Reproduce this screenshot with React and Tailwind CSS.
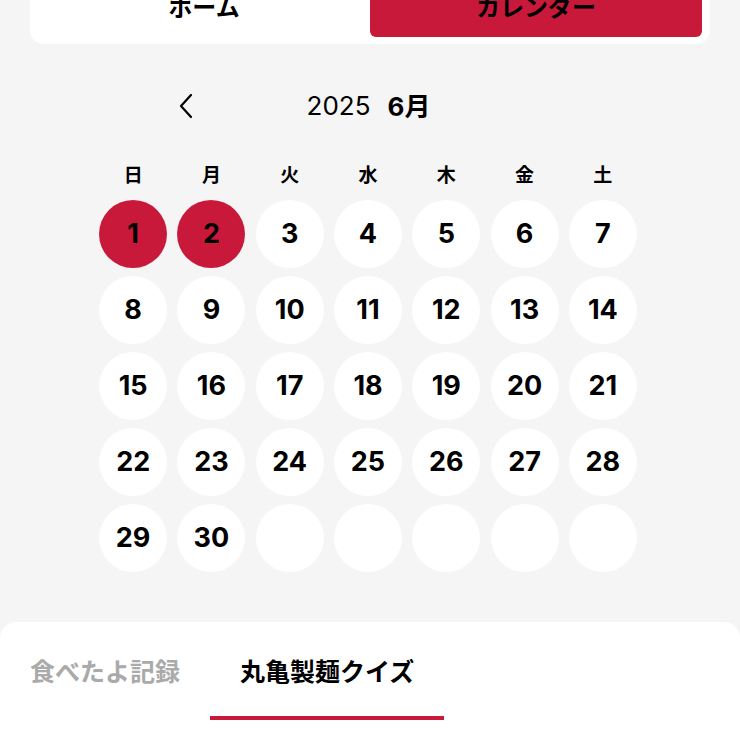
import { useState } from 'react';

const jp = { fontFamily: '"Noto Sans CJK JP", "Noto Sans", sans-serif' };
const num = { fontFamily: 'Inter, "Noto Sans CJK JP", sans-serif' };

const weekdays = ['日', '月', '火', '水', '木', '金', '土'];

export default function App() {
  const [tab, setTab] = useState('quiz');
  const marked = [1, 2];

  // June 2025 starts on Sunday, 30 days, pad to 35 cells
  const cells = Array.from({ length: 35 }, (_, i) => (i < 30 ? i + 1 : null));

  return (
    <div className="h-[740px] bg-[#f5f5f5] overflow-hidden" style={jp}>
      {/* Top switcher */}
      <div className="mx-[30px] -mt-[33px] bg-white rounded-[14px] pt-2 pb-[7px] px-2 flex">
        <button className="flex-1 h-[62px] rounded-[6px] text-[24px] font-bold text-black flex items-center justify-center">
          ホーム
        </button>
        <button className="flex-1 h-[62px] rounded-[6px] bg-[#c8193a] text-[24px] font-bold text-black flex items-center justify-center">
          カレンダー
        </button>
      </div>

      {/* Month nav */}
      <div className="mt-[42px] mx-auto w-[384px] h-10 flex items-center justify-between">
        <button className="w-4 h-10 flex items-center justify-center text-black">
          <svg width="16" height="26" viewBox="0 0 16 26" fill="none">
            <path d="M13 2 L3 13 L13 24" stroke="currentColor" strokeWidth="2.2" strokeLinecap="round" strokeLinejoin="round" />
          </svg>
        </button>
        <div className="flex items-center gap-[17px] text-black text-[26px] leading-none -ml-[3px]">
          <span style={num}>2025</span>
          <span className="font-bold">
            <span style={num}>6</span>月
          </span>
        </div>
        <div className="w-4 h-10" />
      </div>

      {/* Weekdays */}
      <div className="mt-9 ml-[94px] w-[548px] grid grid-cols-7">
        {weekdays.map((d) => (
          <div key={d} className="h-6 flex items-center justify-center text-[19px] font-bold text-black">
            {d}
          </div>
        ))}
      </div>

      {/* Days */}
      <div className="mt-[14px] ml-[94px] w-[548px] grid grid-cols-7 gap-y-2">
        {cells.map((d, i) => (
          <div key={i} className="flex justify-center">
            <div
              className={
                'w-[68px] h-[68px] rounded-full flex items-center justify-center text-[27px] font-bold text-black ' +
                (d && marked.includes(d) ? 'bg-[#c8193a]' : 'bg-white')
              }
              style={num}
            >
              {d}
            </div>
          </div>
        ))}
      </div>

      {/* Bottom sheet */}
      <div className="mt-[50px] bg-white rounded-t-[16px] pt-[29px] h-[200px]">
        <div className="flex">
          <button
            onClick={() => setTab('log')}
            className={
              'px-[30px] flex flex-col items-center text-[25px] font-bold ' +
              (tab === 'log' ? 'text-black' : 'text-[#aaaaaa]')
            }
          >
            <span className="h-10 flex items-center">食べたよ記録</span>
            <span className={'mt-[25px] h-1 w-[calc(100%+60px)] ' + (tab === 'log' ? 'bg-[#c8193a]' : 'bg-transparent')} />
          </button>
          <button
            onClick={() => setTab('quiz')}
            className={
              'px-[30px] flex flex-col items-center text-[25px] font-bold ' +
              (tab === 'quiz' ? 'text-black' : 'text-[#aaaaaa]')
            }
          >
            <span className="h-10 flex items-center">丸亀製麺クイズ</span>
            <span className={'mt-[25px] h-1 w-[calc(100%+60px)] ' + (tab === 'quiz' ? 'bg-[#c8193a]' : 'bg-transparent')} />
          </button>
        </div>
      </div>
    </div>
  );
}
